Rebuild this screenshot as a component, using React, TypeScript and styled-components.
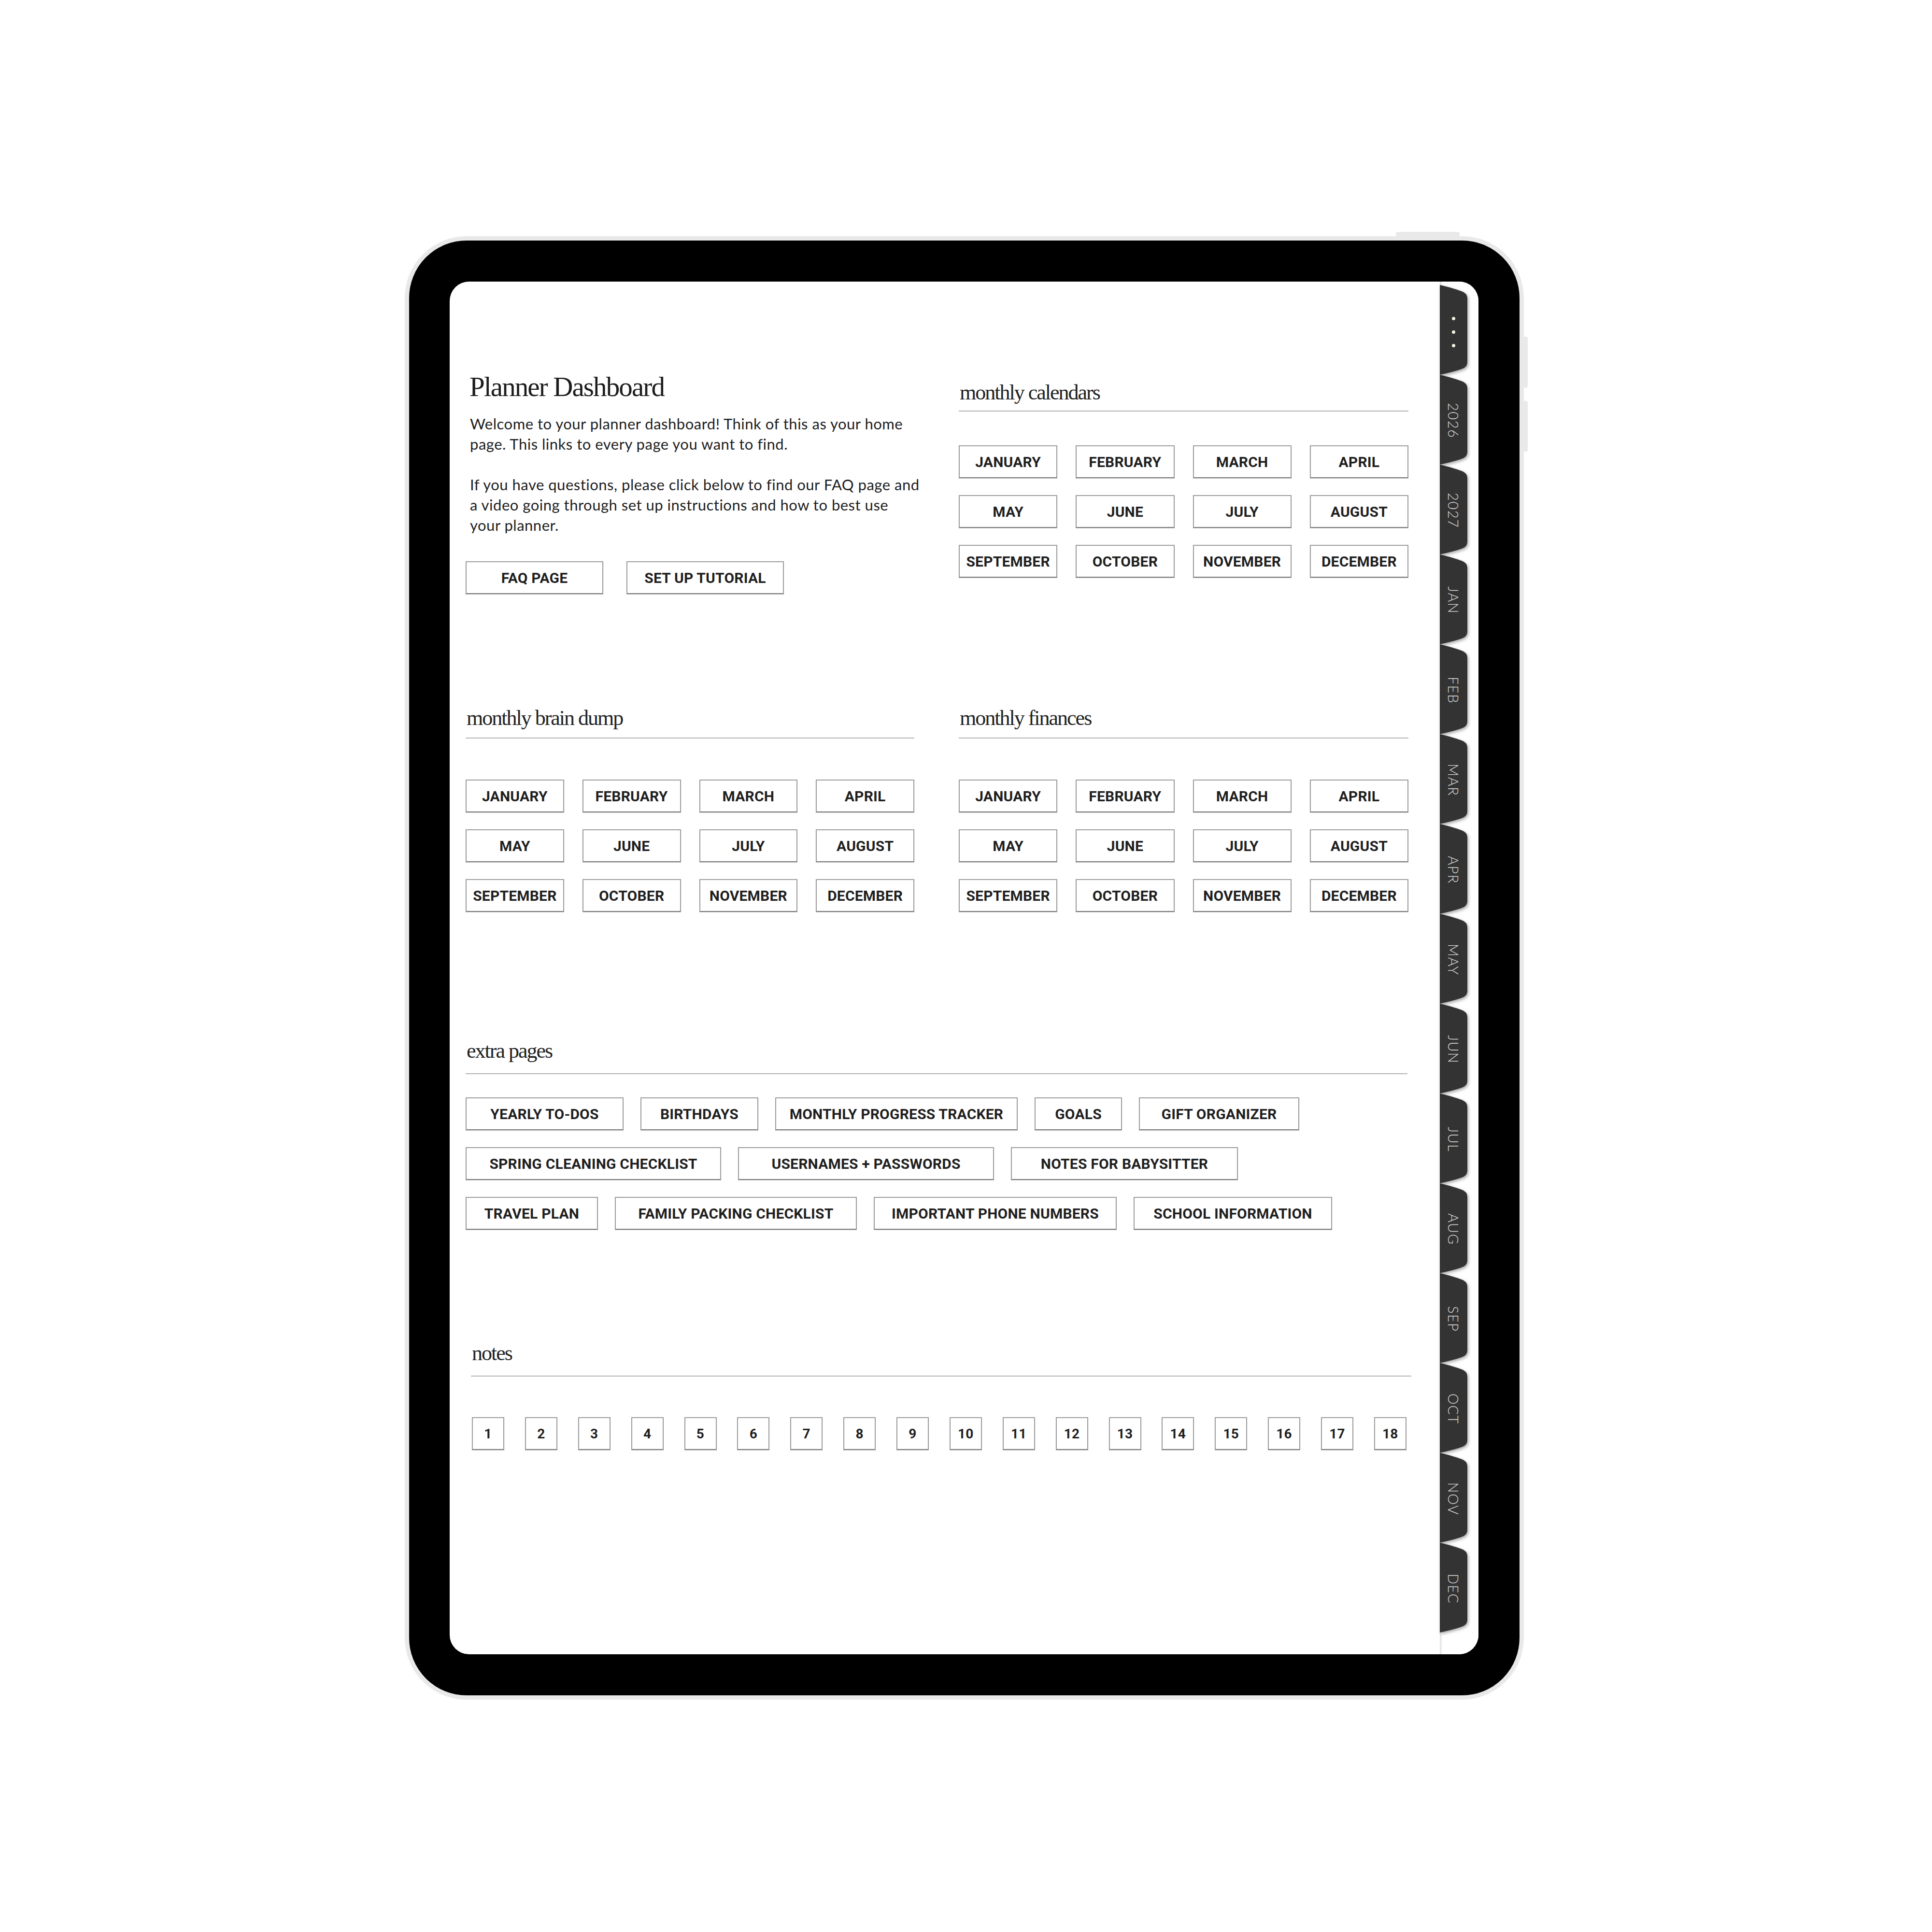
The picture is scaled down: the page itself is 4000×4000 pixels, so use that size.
import styled, { createGlobalStyle } from "styled-components"

const months = [
  "JANUARY", "FEBRUARY", "MARCH", "APRIL",
  "MAY", "JUNE", "JULY", "AUGUST",
  "SEPTEMBER", "OCTOBER", "NOVEMBER", "DECEMBER",
]

const extraRows: { label: string, w: number }[][] = [
  [
    { label: "YEARLY TO-DOS", w: 327 },
    { label: "BIRTHDAYS", w: 244 },
    { label: "MONTHLY PROGRESS TRACKER", w: 502 },
    { label: "GOALS", w: 181 },
    { label: "GIFT ORGANIZER", w: 332 },
  ],
  [
    { label: "SPRING CLEANING CHECKLIST", w: 529 },
    { label: "USERNAMES + PASSWORDS", w: 530 },
    { label: "NOTES FOR BABYSITTER", w: 470 },
  ],
  [
    { label: "TRAVEL PLAN", w: 274 },
    { label: "FAMILY PACKING CHECKLIST", w: 501 },
    { label: "IMPORTANT PHONE NUMBERS", w: 503 },
    { label: "SCHOOL INFORMATION", w: 411 },
  ],
]

const tabs = ["2026", "2027", "JAN", "FEB", "MAR", "APR", "MAY", "JUN", "JUL", "AUG", "SEP", "OCT", "NOV", "DEC"]

function MonthGrid() {
  return (
    <Grid>
      {months.map((m) => <LinkBox key={m}>{m}</LinkBox>)}
    </Grid>
  )
}

function Section({ title, ruleGap, bodyGap, children }: { title: string, ruleGap: number, bodyGap: number, children: any }) {
  return (
    <div>
      <Heading>{title}</Heading>
      <Rule $gap={ruleGap} />
      <SectionBody $gap={bodyGap}>{children}</SectionBody>
    </div>
  )
}

function TabShape() {
  return (
    <TabSvg viewBox="0 0 57 186" preserveAspectRatio="none">
      <path d="M0 0 C18 4 34 9 45 13 Q57 17 57 28 L57 160 Q57 170 45 174 C34 178 18 182 0 186 Z" fill="#333333" />
    </TabSvg>
  )
}

export default function App() {
  return (
    <>
      <GlobalStyle />
      <Page>
        <Device>
          <TopButton />
          <SideButton $top={199} $h={106} />
          <SideButton $top={332} $h={105} />
          <Screen>
            <Content>
              <TwoCols>
                <Intro>
                  <Title>Planner Dashboard</Title>
                  <Para>
                    Welcome to your planner dashboard! Think of this as your home<br />
                    page. This links to every page you want to find.
                  </Para>
                  <Para $spaced>
                    If you have questions, please click below to find our FAQ page and<br />
                    a video going through set up instructions and how to best use<br />
                    your planner.
                  </Para>
                  <ButtonRow>
                    <LinkBox $w={285}>FAQ PAGE</LinkBox>
                    <LinkBox $w={326}>SET UP TUTORIAL</LinkBox>
                  </ButtonRow>
                </Intro>
                <RightTop>
                  <Section title="monthly calendars" ruleGap={12} bodyGap={70}>
                    <MonthGrid />
                  </Section>
                </RightTop>
              </TwoCols>

              <MidRow>
                <Section title="monthly brain dump" ruleGap={15} bodyGap={85}>
                  <MonthGrid />
                </Section>
                <Section title="monthly finances" ruleGap={15} bodyGap={85}>
                  <MonthGrid />
                </Section>
              </MidRow>

              <ExtraBlock>
                <Section title="extra pages" ruleGap={21} bodyGap={48}>
                  <ExtraList>
                    {extraRows.map((row, i) => (
                      <ExtraRow key={i}>
                        {row.map((b) => <LinkBox key={b.label} $w={b.w}>{b.label}</LinkBox>)}
                      </ExtraRow>
                    ))}
                  </ExtraList>
                </Section>
              </ExtraBlock>

              <NotesBlock>
                <Section title="notes" ruleGap={21} bodyGap={84}>
                  <NoteRow>
                    {Array.from({ length: 18 }, (_, i) => <NoteBox key={i}>{i + 1}</NoteBox>)}
                  </NoteRow>
                </Section>
              </NotesBlock>
            </Content>

            <TabStrip>
              <Tab $z={30}>
                <TabShape />
                <Dots>
                  <Dot /><Dot /><Dot />
                </Dots>
              </Tab>
              {tabs.map((t, i) => (
                <Tab key={t} $z={29 - i}>
                  <TabShape />
                  <TabLabel>{t}</TabLabel>
                </Tab>
              ))}
            </TabStrip>
          </Screen>
        </Device>
      </Page>
    </>
  )
}

const GlobalStyle = createGlobalStyle`
  html, body {
    margin: 0;
    padding: 0;
    background: #ffffff;
  }
  * {
    box-sizing: border-box;
  }
`

const Page = styled.div`
  width: 4000px;
  height: 4000px;
  display: flex;
  justify-content: flex-start;
  align-items: flex-start;
  padding: 489px 0 0 838px;
  background: #ffffff;
`

const Device = styled.div`
  position: relative;
  width: 2317px;
  height: 3030px;
  padding: 85px 85px 85px 84px;
  background: #000000;
  border: 9px solid #e9e9e9;
  border-radius: 128px;
`

const TopButton = styled.div`
  position: absolute;
  top: -18px;
  left: 2043px;
  width: 132px;
  height: 9px;
  background: #e9e9e9;
  border-radius: 4px 4px 0 0;
`

const SideButton = styled.div<{ $top: number, $h: number }>`
  position: absolute;
  top: ${(p) => p.$top}px;
  right: -17px;
  width: 8px;
  height: ${(p) => p.$h}px;
  background: #e9e9e9;
  border-radius: 0 4px 4px 0;
`

const Screen = styled.div`
  width: 2130px;
  height: 2842px;
  background: #ffffff;
  border-radius: 40px;
  overflow: hidden;
  display: flex;
`

const Content = styled.div`
  flex: 1;
  padding: 186px 0 0 33px;
  display: flex;
  flex-direction: column;
`

const TwoCols = styled.div`
  display: grid;
  grid-template-columns: 929px 931px;
  column-gap: 92px;
  align-items: start;
`

const MidRow = styled(TwoCols)`
  margin-top: 232px;
`

const Intro = styled.div`
  display: flex;
  flex-direction: column;
`

const RightTop = styled.div`
  margin-top: 19px;
`

const Title = styled.h1`
  margin: 0;
  padding-left: 8px;
  font-family: "Liberation Serif", "Times New Roman", serif;
  font-weight: 400;
  font-size: 57px;
  line-height: 64px;
  letter-spacing: -1.9px;
  color: #1c1c1c;
`

const Para = styled.p<{ $spaced?: boolean }>`
  margin: ${(p) => (p.$spaced ? "42px" : "23px")} 0 0 0;
  padding-left: 9px;
  font-family: Lato, "Liberation Sans", sans-serif;
  font-weight: 400;
  font-size: 31px;
  line-height: 42px;
  letter-spacing: 0.5px;
  color: #1e1e1e;
  white-space: nowrap;
`

const ButtonRow = styled.div`
  display: flex;
  gap: 48px;
  margin-top: 54px;
`

const LinkBox = styled.div<{ $w?: number }>`
  width: ${(p) => (p.$w ? `${p.$w}px` : "auto")};
  height: 68px;
  display: flex;
  align-items: center;
  justify-content: center;
  background: #ffffff;
  border: 2px solid #9d9d9d;
  border-bottom-color: #7c7c7c;
  box-shadow: 0 1px 1px rgba(0, 0, 0, 0.18);
  font-family: Roboto, "Liberation Sans", sans-serif;
  font-weight: 700;
  font-size: 30px;
  letter-spacing: 0.2px;
  color: #1f1f1f;
  white-space: nowrap;
`

const Heading = styled.h2`
  margin: 0;
  padding-left: 2px;
  font-family: "Liberation Serif", "Times New Roman", serif;
  font-weight: 400;
  font-size: 44px;
  line-height: 50px;
  letter-spacing: -2px;
  color: #222222;
`

const Rule = styled.div<{ $gap: number }>`
  margin-top: ${(p) => p.$gap}px;
  height: 2px;
  background: #b4b4b4;
`

const SectionBody = styled.div<{ $gap: number }>`
  margin-top: ${(p) => p.$gap}px;
`

const Grid = styled.div`
  display: grid;
  grid-template-columns: repeat(4, 1fr);
  column-gap: 38px;
  row-gap: 35px;
`

const ExtraBlock = styled.div`
  margin-top: 263px;
  width: 1950px;
`

const ExtraList = styled.div`
  display: flex;
  flex-direction: column;
  gap: 35px;
`

const ExtraRow = styled.div`
  display: flex;
  gap: 35px;
`

const NotesBlock = styled.div`
  margin-top: 231px;
  margin-left: 11px;
  width: 1947px;
`

const NoteRow = styled.div`
  display: flex;
  justify-content: space-between;
  width: 1937px;
  padding-left: 2px;
`

const NoteBox = styled(LinkBox)`
  width: 67px;
  font-size: 28px;
`

const TabStrip = styled.div`
  width: 80px;
  padding-top: 7px;
  display: flex;
  flex-direction: column;
  background: linear-gradient(to right, #dedede 0, #efefef 3px, #ffffff 6px);
`

const Tab = styled.div<{ $z: number }>`
  position: relative;
  z-index: ${(p) => p.$z};
  width: 57px;
  height: 186px;
  flex-shrink: 0;
  display: flex;
  align-items: center;
  justify-content: center;
`

const TabSvg = styled.svg`
  position: absolute;
  inset: 0;
  width: 57px;
  height: 186px;
  overflow: visible;
  filter: drop-shadow(2px 3px 3px rgba(0, 0, 0, 0.35));
`

const TabLabel = styled.span`
  position: relative;
  writing-mode: vertical-rl;
  font-family: Lato, "Liberation Sans", sans-serif;
  font-weight: 300;
  font-size: 29px;
  letter-spacing: 1.5px;
  color: #dcdcdc;
  margin-top: 4px;
`

const Dots = styled.div`
  position: relative;
  display: flex;
  flex-direction: column;
  gap: 21px;
  margin-top: 8px;
`

const Dot = styled.span`
  width: 7px;
  height: 7px;
  border-radius: 50%;
  background: #f4f0e4;
`
